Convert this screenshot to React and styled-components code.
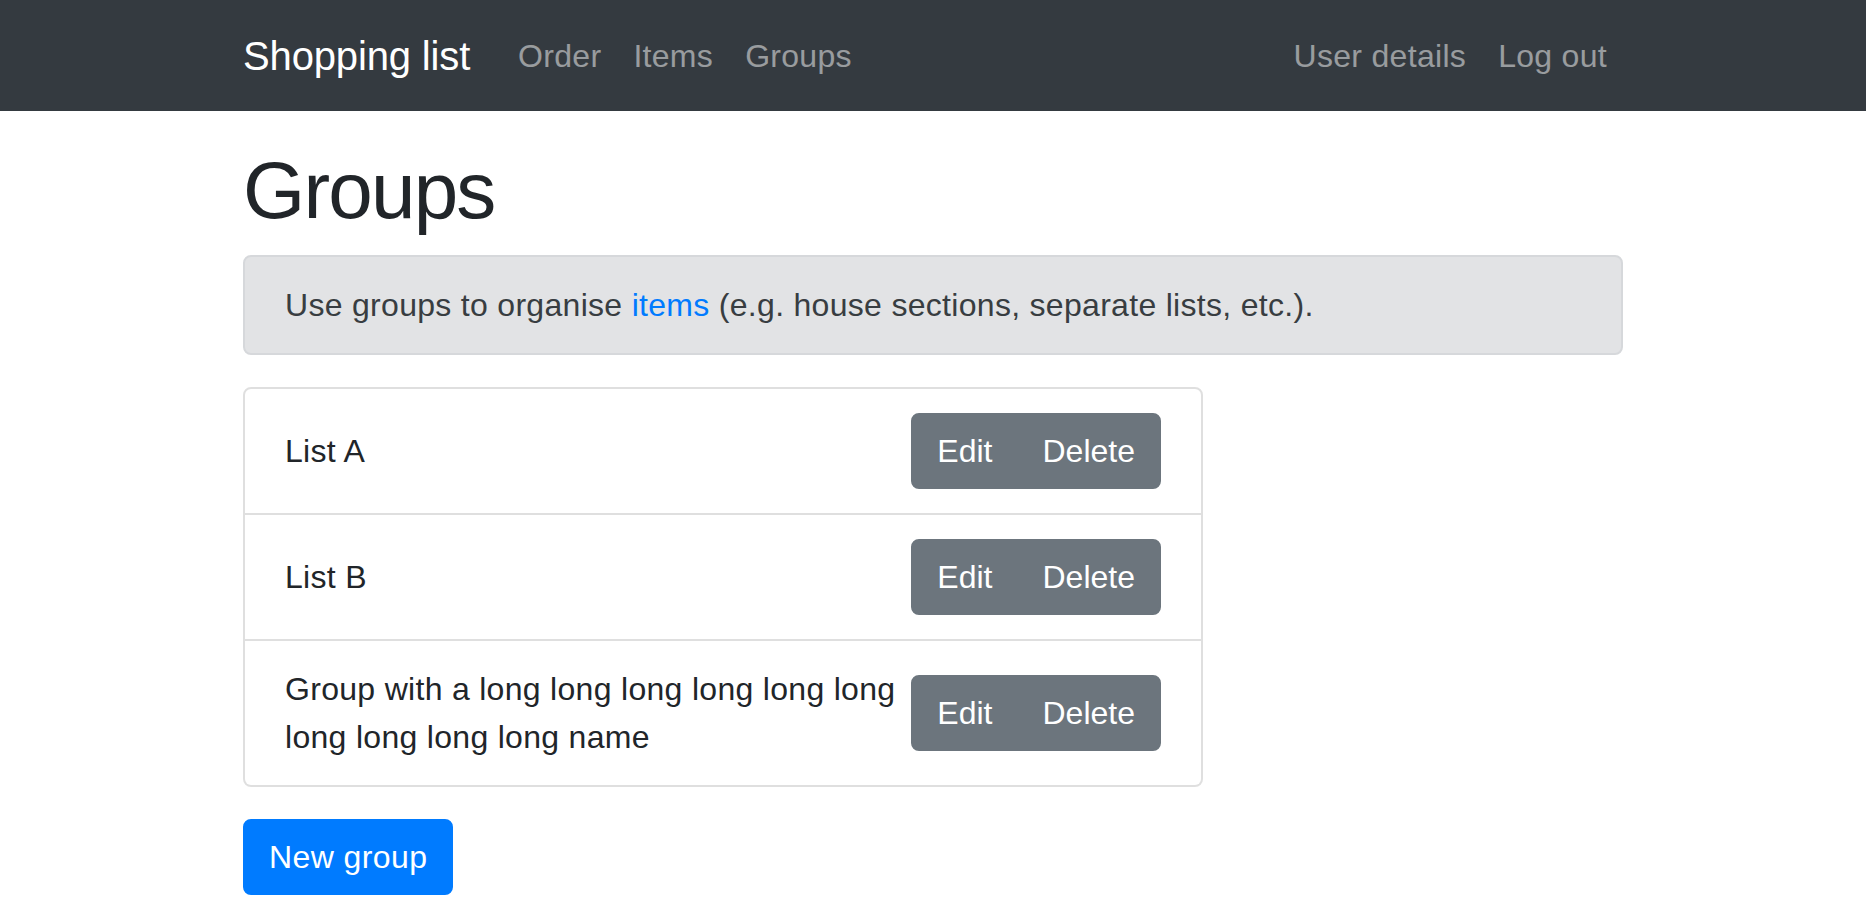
import React from "react";
import styled, { createGlobalStyle } from "styled-components";

const GlobalStyle = createGlobalStyle`
  *, *::before, *::after { box-sizing: border-box; }
  html, body { margin: 0; padding: 0; }
  body {
    font-family: "Liberation Sans", Arial, sans-serif;
    font-size: 32px;
    line-height: 1.5;
    color: #212529;
    background: #fff;
  }
`;

const Navbar = styled.nav`
  background: #343a40;
  padding: 15.5px 0;
`;

const Container = styled.div`
  width: 1380px;
  margin: 0 auto;
`;

const NavInner = styled(Container)`
  display: flex;
  align-items: center;
`;

const Brand = styled.a`
  font-size: 40px;
  line-height: 60px;
  padding: 10px 0;
  margin-right: 32px;
  color: #fff;
  text-decoration: none;
  white-space: nowrap;
  letter-spacing: -0.15px;
`;

const NavList = styled.ul`
  display: flex;
  list-style: none;
  margin: 0;
  padding: 0;
  margin-left: ${(p) => (p.$right ? "auto" : "0")};
`;

const NavLink = styled.a`
  display: block;
  padding: 16px;
  line-height: 48px;
  color: rgba(255, 255, 255, 0.5);
  text-decoration: none;
  letter-spacing: 0.3px;
`;

const Main = styled(Container)`
  padding-top: 32px;
`;

const Title = styled.h1`
  font-size: 80px;
  font-weight: 500;
  line-height: 1.2;
  letter-spacing: -1.8px;
  margin: 0 0 16px;
`;

const Alert = styled.div`
  background: #e2e3e5;
  border: 2px solid #d6d8db;
  color: #383d41;
  border-radius: 8px;
  padding: 24px 40px;
  margin-bottom: 32px;
  letter-spacing: 0.3px;
`;

const Link = styled.a`
  color: #007bff;
  text-decoration: none;
`;

const ListGroup = styled.ul`
  width: 960px;
  list-style: none;
  margin: 0 0 32px;
  padding: 0;
  display: flex;
  flex-direction: column;
`;

const ListItem = styled.li`
  display: flex;
  justify-content: space-between;
  align-items: center;
  padding: 24px 40px;
  border: 2px solid rgba(0, 0, 0, 0.125);
  letter-spacing: 0.3px;
  & + & { border-top-width: 0; }
  &:first-child { border-top-left-radius: 8px; border-top-right-radius: 8px; }
  &:last-child { border-bottom-left-radius: 8px; border-bottom-right-radius: 8px; }
`;

const BtnGroup = styled.div`
  display: inline-flex;
  flex-shrink: 0;
`;

const Button = styled.button`
  font-family: inherit;
  font-size: 32px;
  line-height: 48px;
  padding: 12px 24px;
  border: 2px solid ${(p) => (p.$primary ? "#007bff" : "#6c757d")};
  background: ${(p) => (p.$primary ? "#007bff" : "#6c757d")};
  color: #fff;
  border-radius: 8px;
  cursor: pointer;
  letter-spacing: ${(p) => (p.$primary ? "0.4px" : "0")};
  ${BtnGroup} > & {
    border-radius: 0;
  }
  ${BtnGroup} > &:first-child {
    border-top-left-radius: 8px;
    border-bottom-left-radius: 8px;
  }
  ${BtnGroup} > &:last-child {
    border-top-right-radius: 8px;
    border-bottom-right-radius: 8px;
    margin-left: -2px;
  }
`;

const groups = [
  "List A",
  "List B",
  "Group with a long long long long long long long long long long name",
];

export default function App() {
  return (
    <>
      <GlobalStyle />
      <Navbar>
        <NavInner>
          <Brand href="#">Shopping list</Brand>
          <NavList>
            <li><NavLink href="#">Order</NavLink></li>
            <li><NavLink href="#">Items</NavLink></li>
            <li><NavLink href="#">Groups</NavLink></li>
          </NavList>
          <NavList $right>
            <li><NavLink href="#">User details</NavLink></li>
            <li><NavLink href="#">Log out</NavLink></li>
          </NavList>
        </NavInner>
      </Navbar>
      <Main>
        <Title>Groups</Title>
        <Alert>
          Use groups to organise <Link href="#">items</Link> (e.g. house sections, separate lists, etc.).
        </Alert>
        <ListGroup>
          {groups.map((g) => (
            <ListItem key={g}>
              <span>{g}</span>
              <BtnGroup>
                <Button>Edit</Button>
                <Button>Delete</Button>
              </BtnGroup>
            </ListItem>
          ))}
        </ListGroup>
        <Button $primary>New group</Button>
      </Main>
    </>
  );
}
